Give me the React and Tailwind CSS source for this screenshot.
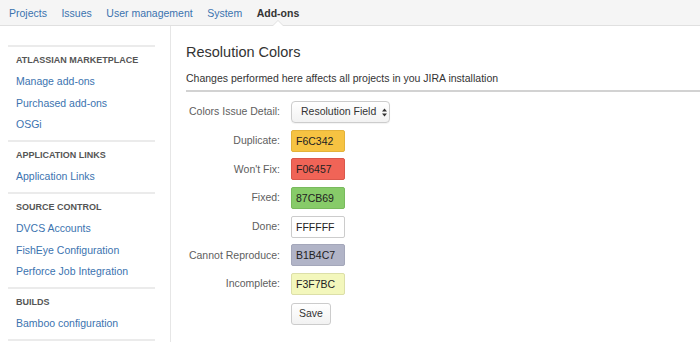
import React from 'react';

const navItems = ['Projects', 'Issues', 'User management', 'System', 'Add-ons'];

const sections = [
  { title: 'ATLASSIAN MARKETPLACE', links: ['Manage add-ons', 'Purchased add-ons', 'OSGi'] },
  { title: 'APPLICATION LINKS', links: ['Application Links'] },
  { title: 'SOURCE CONTROL', links: ['DVCS Accounts', 'FishEye Configuration', 'Perforce Job Integration'] },
  { title: 'BUILDS', links: ['Bamboo configuration'] },
];

const colors = [
  { label: 'Duplicate:', value: 'F6C342', bg: 'bg-[#f6c342]', border: 'border-[#e3b23a]' },
  { label: "Won't Fix:", value: 'F06457', bg: 'bg-[#f06457]', border: 'border-[#da574b]' },
  { label: 'Fixed:', value: '87CB69', bg: 'bg-[#87cb69]', border: 'border-[#79ba5d]' },
  { label: 'Done:', value: 'FFFFFF', bg: 'bg-white', border: 'border-[#cccccc]' },
  { label: 'Cannot Reproduce:', value: 'B1B4C7', bg: 'bg-[#b1b4c7]', border: 'border-[#a4a7ba]' },
  { label: 'Incomplete:', value: 'F3F7BC', bg: 'bg-[#f3f7bc]', border: 'border-[#dcdfa8]' },
];

const App = () => {
  return (
    <div className="w-[700px] h-[342px] overflow-hidden bg-white font-['Liberation_Sans',Arial,sans-serif] text-[#333]">
      {/* Top nav */}
      <nav className="h-[26px] bg-[#f5f5f5] border-b border-[#e0e0e0] flex items-center pl-[9px] gap-[14.5px] text-[10.5px] leading-[14px]">
        {navItems.map((item) => (
          <span
            key={item}
            className={item === 'Add-ons' ? 'relative font-bold text-[#333]' : 'text-[#3b73af]'}
          >
            {item}
            {item === 'Add-ons' && (
              <span className="absolute left-1/2 -translate-x-1/2 top-[14px] w-0 h-0 border-l-[6px] border-r-[6px] border-b-[6px] border-l-transparent border-r-transparent border-b-[#e0e0e0]">
                <span className="absolute left-[-5px] top-[1px] w-0 h-0 border-l-[5px] border-r-[5px] border-b-[5px] border-l-transparent border-r-transparent border-b-white" />
              </span>
            )}
          </span>
        ))}
      </nav>

      <div className="flex h-[316px]">
        {/* Sidebar */}
        <aside className="w-[171px] shrink-0 border-r border-[#e6e6e6] pl-[8px] pr-[15px] pt-[19px]">
          <div className="border-b-2 border-[#ebebeb]">
            {sections.map((s) => (
              <div key={s.title} className="border-t-2 border-[#ebebeb] pt-[6px] pb-[4.5px]">
                <h3 className="text-[9px] font-bold text-[#555] h-[14px] leading-[14px] pl-[8px]">{s.title}</h3>
                <ul className="mt-[4px]">
                  {s.links.map((l) => (
                    <li key={l} className="h-[21.5px] leading-[21.5px] pl-[8px] text-[10.5px] text-[#3b73af]">
                      {l}
                    </li>
                  ))}
                </ul>
              </div>
            ))}
          </div>
        </aside>

        {/* Main content */}
        <main className="flex-1 pl-[15px] pt-[16px]">
          <h1 className="text-[14.5px] leading-[20px] text-[#333]">Resolution Colors</h1>
          <p className="mt-[9px] text-[10.5px] leading-[14px] text-[#333]">
            Changes performed here affects all projects in you JIRA installation
          </p>
          <div className="mt-[5px] h-[2px] bg-[#d2d2d2]" />

          <div className="mt-[9px] grid grid-cols-[94px_auto] gap-x-[11px] gap-y-[6.7px] items-center text-[10.5px]">
            <label className="flex justify-end whitespace-nowrap text-[#5e5e5e]">Colors Issue Detail:</label>
            <div>
              <div className="inline-flex items-center w-[99px] h-[22px] rounded-[4px] border border-[#cccccc] bg-gradient-to-b from-white to-[#f2f2f2] shadow-[0_1px_1px_rgba(0,0,0,0.05)] pl-[9px] text-[#333]">
                Resolution Field
                <svg className="ml-[6px]" width="5" height="9" viewBox="0 0 5 9">
                  <path d="M0 3.6 L2.5 0.5 L5 3.6 Z" fill="#333" />
                  <path d="M0 5.4 L2.5 8.5 L5 5.4 Z" fill="#333" />
                </svg>
              </div>
            </div>
            {colors.map((c) => (
              <React.Fragment key={c.label}>
                <label className="flex justify-end whitespace-nowrap text-[#5e5e5e]">{c.label}</label>
                <div>
                  <div
                    className={`w-[54px] h-[22px] border ${c.bg} ${c.border} rounded-[2px] pl-[4px] leading-[20px] text-[#222]`}
                  >
                    {c.value}
                  </div>
                </div>
              </React.Fragment>
            ))}
            <div />
            <div className="pt-[1px]">
              <button className="w-[40px] h-[22px] rounded-[3px] border border-[#cccccc] bg-gradient-to-b from-white to-[#f2f2f2] text-[#333]">
                Save
              </button>
            </div>
          </div>
        </main>
      </div>
    </div>
  );
};

export default App;
